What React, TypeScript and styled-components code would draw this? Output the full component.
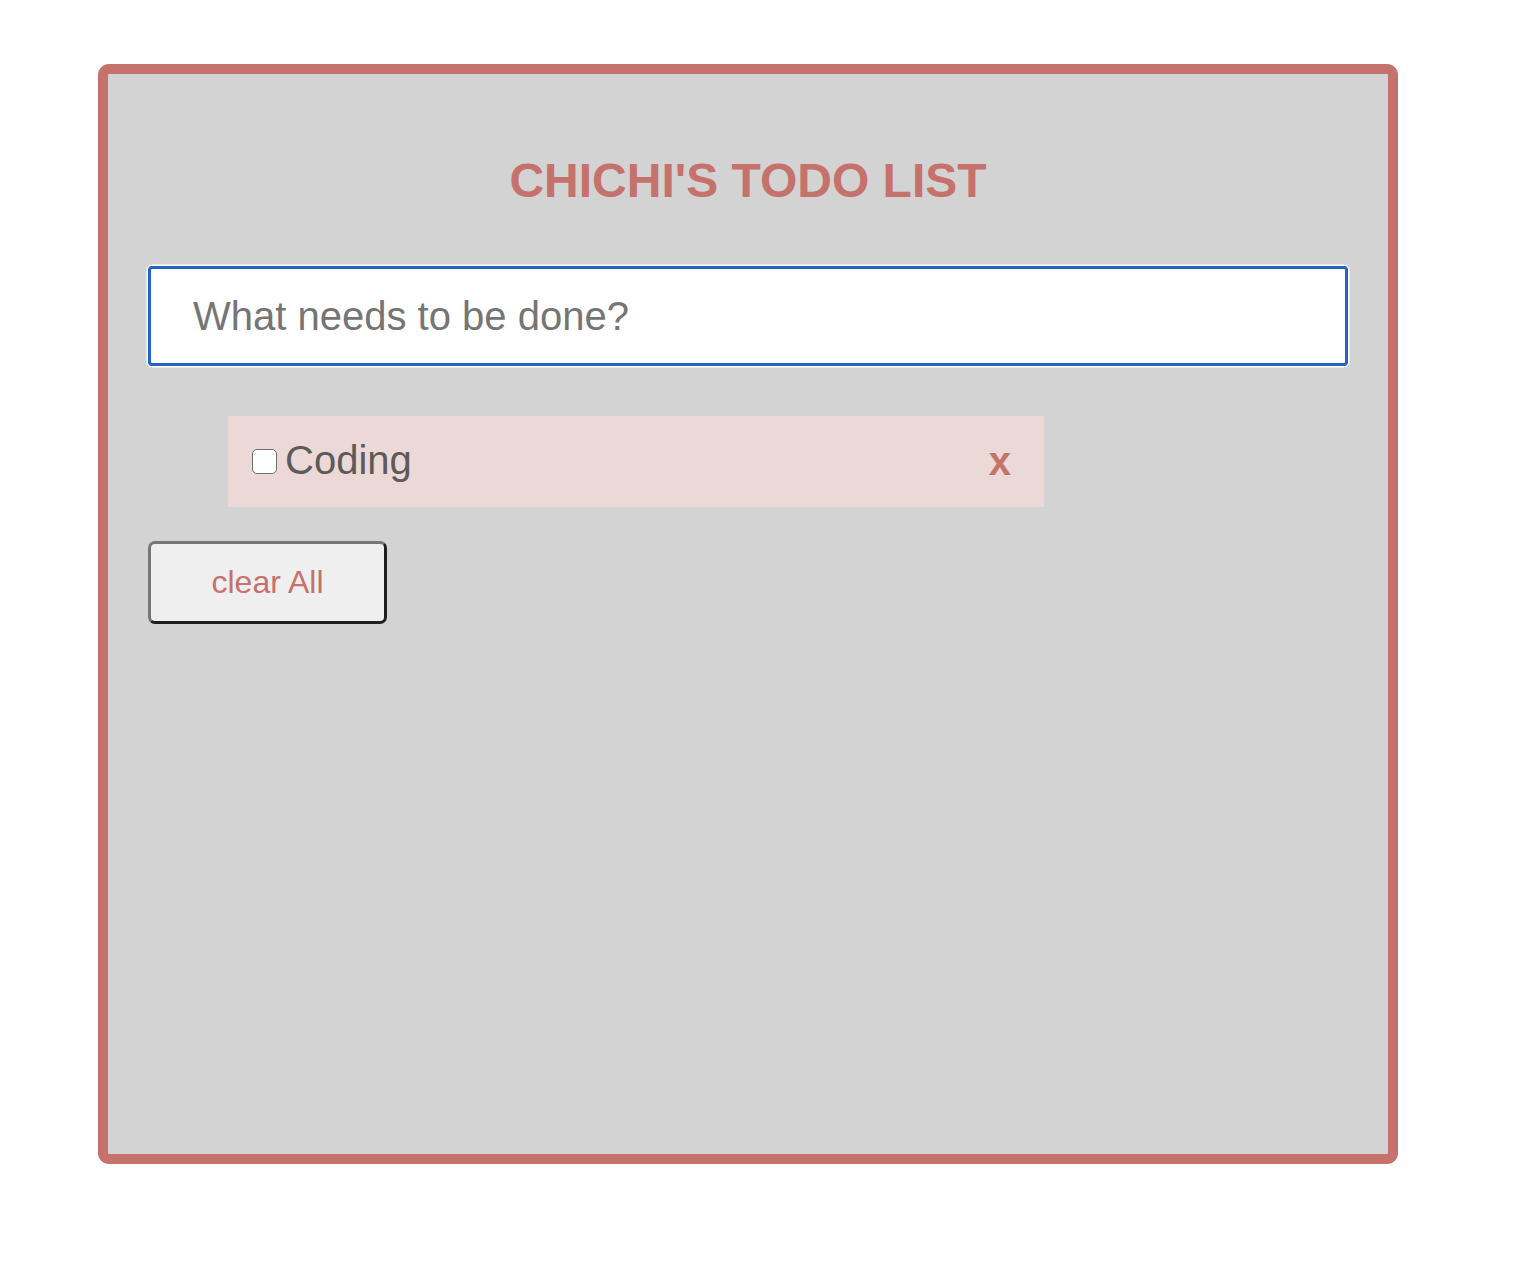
import React, { useState } from "react";
import styled, { createGlobalStyle } from "styled-components";

const GlobalStyle = createGlobalStyle`
  html, body {
    margin: 0;
    padding: 0;
    background: #ffffff;
  }
  body {
    font-family: "Liberation Sans", Arial, Helvetica, sans-serif;
  }
`;

const Page = styled.div`
  padding: 64px 0 0 98px;
`;

const Board = styled.main`
  box-sizing: border-box;
  width: 1300px;
  height: 1100px;
  background: #d3d3d3;
  border: 10px solid #c5716c;
  border-radius: 11px;
  display: flex;
  flex-direction: column;
  padding: 79px 40px 0;
`;

const Title = styled.h1`
  margin: 0;
  font-size: 48px;
  font-weight: 700;
  line-height: 55px;
  color: #c5716c;
  text-align: center;
`;

const TodoInput = styled.input`
  box-sizing: border-box;
  margin-top: 58px;
  width: 1200px;
  height: 100px;
  border: 3px solid #2563c6;
  border-radius: 4px;
  box-shadow: 0 0 0 1.5px #ffffff;
  background: #ffffff;
  outline: none;
  padding: 0 0 0 42px;
  font-family: "Liberation Sans", Arial, Helvetica, sans-serif;
  font-size: 40px;
  color: #333;
  caret-color: #333;

  &::placeholder {
    color: #757575;
  }
`;

const List = styled.ul`
  list-style: none;
  margin: 50px 0 0;
  padding: 0 0 0 80px;
`;

const Item = styled.li`
  box-sizing: border-box;
  width: 816px;
  height: 91px;
  background: #ecd8d7;
  display: flex;
  align-items: center;
  padding: 0 33px 0 24px;
`;

const Check = styled.input`
  appearance: none;
  box-sizing: border-box;
  width: 25px;
  height: 25px;
  margin: 0 8px 0 0;
  border: 1.5px solid #6e6e6e;
  border-radius: 5px;
  background: #ffffff;
  flex: none;
`;

const Label = styled.span`
  flex: 1;
  font-size: 40px;
  color: #5d5a5a;
  margin-top: -2px;
`;

const Remove = styled.span`
  font-size: 40px;
  font-weight: 700;
  color: #c5716c;
  line-height: 1;
  margin-top: -2px;
`;

const ClearButton = styled.button`
  box-sizing: border-box;
  margin-top: 34px;
  width: 239px;
  height: 83px;
  background: #efefef;
  border-style: solid;
  border-width: 3px;
  border-color: #767676 #1e1e1e #1e1e1e #767676;
  border-radius: 7px;
  font-family: "Liberation Sans", Arial, Helvetica, sans-serif;
  font-size: 32px;
  color: #c5716c;
  padding: 0;
  align-self: flex-start;
`;

export default function App() {
  const [text, setText] = useState("");
  return (
    <>
      <GlobalStyle />
      <Page>
        <Board>
          <Title>CHICHI'S TODO LIST</Title>
          <TodoInput
            autoFocus
            placeholder="What needs to be done?"
            value={text}
            onChange={(e) => setText(e.target.value)}
          />
          <List>
            <Item>
              <Check type="checkbox" />
              <Label>Coding</Label>
              <Remove>x</Remove>
            </Item>
          </List>
          <ClearButton>clear All</ClearButton>
        </Board>
      </Page>
    </>
  );
}
